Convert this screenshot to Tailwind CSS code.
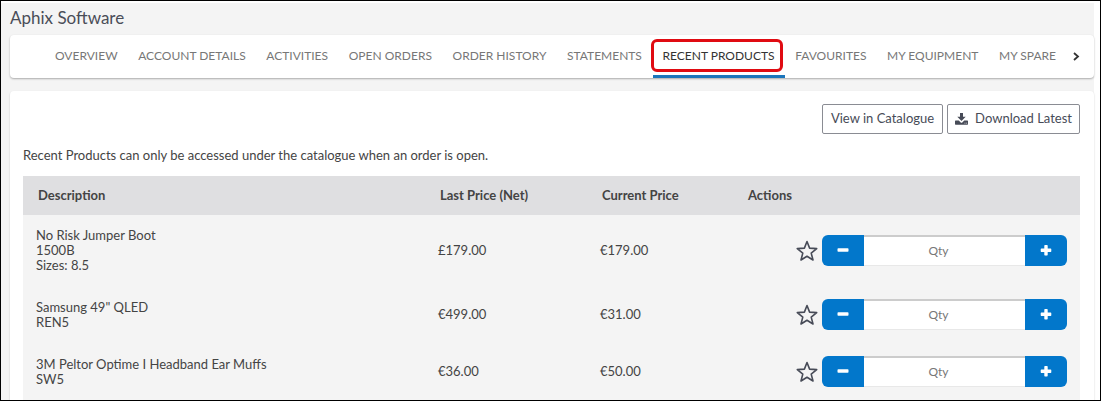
<!DOCTYPE html>
<html lang="en">
<head>
  <meta charset="UTF-8" />
  <meta name="viewport" content="width=device-width, initial-scale=1" />
  <title>Aphix Software - Recent Products</title>
  <script src="https://cdn.jsdelivr.net/npm/@tailwindcss/browser@4"></script>
</head>
<body class="h-screen overflow-hidden border border-black bg-white pt-[2px] pr-[6px] font-['Lato',sans-serif] text-[13px] text-[#444]">
  <svg class="hidden">
    <symbol id="star" viewBox="0 0 22 22">
      <path d="M11 1.500l2.600 6.600 7.100.5-5.500 4.500 1.800 6.900-6-3.800-6 3.800 1.800-6.900-5.500-4.500 7.100-.5z" fill="none" stroke="#474b57" stroke-width="1.600" stroke-linejoin="round" />
    </symbol>
    <symbol id="minus" viewBox="0 0 12 12">
      <rect x="0.5" y="3.300" width="11" height="3.400" rx="0.8" fill="#fff" />
    </symbol>
    <symbol id="plus" viewBox="0 0 12 12">
      <path d="M5 0h2a.7.7 0 0 1 .7.7v2.800h2.900a.7.7 0 0 1 .7.7v2a.7.7 0 0 1-.7.7H7.700v2.800a.7.7 0 0 1-.7.7H5a.7.7 0 0 1-.7-.7V6.900H1.400a.7.7 0 0 1-.7-.7v-2a.7.7 0 0 1 .7-.7h2.900V.7A.7.7 0 0 1 5 0z" fill="#fff" />
    </symbol>
  </svg>

  <div class="h-full bg-[#f4f4f4] pl-[9px]">
    <h1 class="pt-[3px] text-[17px] leading-6 text-[#4a4d58]">Aphix Software</h1>

    <!-- Tabs -->
    <nav class="mt-[5px] flex h-[43px] items-center rounded bg-white pr-2 pl-[35px] text-[12px] whitespace-nowrap text-[#777] shadow-[0_1px_2px_rgba(0,0,0,0.3)]">
      <div class="flex h-full flex-auto justify-between">
        <a href="#" class="flex items-center px-[10px] pb-px">OVERVIEW</a>
        <a href="#" class="flex items-center px-[10px] pb-px">ACCOUNT DETAILS</a>
        <a href="#" class="flex items-center px-[10px] pb-px">ACTIVITIES</a>
        <a href="#" class="flex items-center px-[10px] pb-px">OPEN ORDERS</a>
        <a href="#" class="flex items-center px-[10px] pb-px">ORDER HISTORY</a>
        <a href="#" class="flex items-center px-[10px] pb-px">STATEMENTS</a>
        <a href="#" aria-current="page" class="relative flex items-center border-b-3 border-[#1b75bb] px-[10px] pt-[2px] text-[#333]">
          RECENT PRODUCTS
          <span class="absolute top-1 right-[2px] -left-[2px] h-[33px] rounded-md border-3 border-[#e00b12]"></span>
        </a>
        <a href="#" class="flex items-center px-[10px] pb-px">FAVOURITES</a>
        <a href="#" class="flex items-center px-[10px] pb-px">MY EQUIPMENT</a>
        <a href="#" class="flex items-center px-[10px] pb-px">MY SPARE</a>
      </div>
      <button type="button" aria-label="More tabs" class="p-1">
        <svg class="size-3" viewBox="0 0 12 12"><path d="M4 2L8 5.500 4 9" fill="none" stroke="#333" stroke-width="1.800" /></svg>
      </button>
    </nav>

    <main class="mt-[13px] rounded bg-white py-[13px] pr-[14px] pl-[13px] shadow-[0_1px_2px_rgba(0,0,0,0.2)]">
      <div class="flex justify-end gap-1">
        <button type="button" class="h-[30px] rounded-xs border border-[#8a8c93] px-2 text-[#474b57]">View in Catalogue</button>
        <button type="button" class="flex h-[30px] items-center gap-[7px] rounded-xs border border-[#8a8c93] px-[7px] text-[#474b57]">
          <svg class="h-3 w-[13px]" viewBox="0 0 13 12" fill="#474b57">
            <path d="M5 0h3v3.800h2.700L6.500 8 2.300 3.800H5z" />
            <path d="M.6 7.600h3.200l1.700 1.700a1.400 1.400 0 0 0 2 0l1.700-1.700h3.200a.6.6 0 0 1 .6.6v2.900a.6.6 0 0 1-.6.6H.6a.6.6 0 0 1-.6-.6V8.200a.6.6 0 0 1 .6-.6zM9.500 9.700v.9h.9v-.9zM11.200 9.700v.9h.9v-.9z" fill-rule="evenodd" />
          </svg>
          Download Latest
        </button>
      </div>
      <p class="mt-[11px] mb-[11px] leading-5">Recent Products can only be accessed under the catalogue when an order is open.</p>

      <table class="w-full table-fixed bg-[#f4f4f4] text-left leading-[15px]">
        <thead class="h-[39px] bg-[#dfdfe1]">
          <tr>
            <th class="px-[15px] font-bold">Description</th>
            <th class="w-[162px] px-[15px] font-bold">Last Price (Net)</th>
            <th class="w-[146px] px-[15px] font-bold">Current Price</th>
            <th class="w-[347px] px-[15px] font-bold">Actions</th>
          </tr>
        </thead>
        <tbody id="products"></tbody>
      </table>
    </main>
  </div>

<script>
  const products = [
    { lines: ['No Risk Jumper Boot', '1500B', 'Sizes: 8.5'], last: '£179.00', current: '€179.00' },
    { lines: ['Samsung 49" QLED', 'REN5'], last: '€499.00', current: '€31.00' },
    { lines: ['3M Peltor Optime I Headband Ear Muffs', 'SW5'], last: '€36.00', current: '€50.00' },
  ];

  document.getElementById('products').innerHTML = products.map(p => `
    <tr>
      <td class="p-[13px]">${p.lines.join('<br>')}</td>
      <td class="p-[13px]">${p.last}</td>
      <td class="p-[13px]">${p.current}</td>
      <td class="p-[13px]">
        <div class="flex items-center justify-end gap-1">
          <button type="button" aria-label="Add to favourites"><svg class="size-[22px]"><use href="#star" /></svg></button>
          <div class="flex h-[31px] w-[245px] overflow-hidden rounded-md">
            <button type="button" aria-label="Decrease" class="flex w-[42px] items-center justify-center bg-[#0277cb]"><svg class="size-3"><use href="#minus" /></svg></button>
            <input type="text" placeholder="Qty" aria-label="Quantity" class="min-w-0 flex-1 border-t-2 border-b border-t-[#ccc] border-b-[#e8e8e8] bg-white pr-3 pb-[2px] text-center text-[12px] placeholder:text-[#777]" />
            <button type="button" aria-label="Increase" class="flex w-[42px] items-center justify-center bg-[#0277cb]"><svg class="size-3"><use href="#plus" /></svg></button>
          </div>
        </div>
      </td>
    </tr>`).join('');
</script>
</body>
</html>
